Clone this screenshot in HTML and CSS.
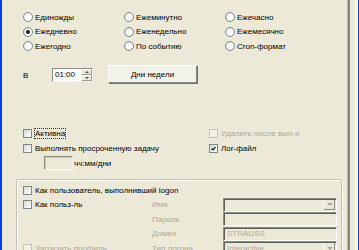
FILE: index.html
```html
<!DOCTYPE html>
<html lang="ru">
<head>
    <meta charset="UTF-8" />
    <title>Расписание</title>
    <link rel="stylesheet" href="styles.css">
</head>
<body>
    <div class="window">
        <div class="edge-left"></div>
        <div class="page">
            <div class="modes">
                <label class="opt"><span class="radio"></span>Единожды</label>
                <label class="opt"><span class="radio"></span>Ежеминутно</label>
                <label class="opt"><span class="radio"></span>Ежечасно</label>
                <label class="opt"><span class="radio on"></span>Ежедневно</label>
                <label class="opt"><span class="radio"></span>Еженедельно</label>
                <label class="opt"><span class="radio"></span>Ежемесячно</label>
                <label class="opt"><span class="radio"></span>Ежегодно</label>
                <label class="opt"><span class="radio"></span>По событию</label>
                <label class="opt"><span class="radio"></span>Cron-формат</label>
            </div>

            <div class="time-row">
                <span class="time-label">В</span>
                <div class="spin">
                    <span class="spin-value">01:00</span>
                    <span class="spin-btns">
                        <span class="spin-btn"><i class="arr up"></i></span>
                        <span class="spin-btn"><i class="arr down"></i></span>
                    </span>
                </div>
                <button class="btn">Дни недели</button>
            </div>

            <div class="flags">
                <label class="opt"><span class="check"></span><span class="focus">Активна</span></label>
                <label class="opt off"><span class="check"></span>Удалить после вып-я</label>
                <label class="opt"><span class="check"></span>Выполнять просроченную задачу</label>
                <label class="opt"><span class="check on"><svg viewBox="0 0 9 9"><polyline points="2,4.5 3.8,6.3 7,2.5" /></svg></span>Лог-файл</label>
            </div>
            <div class="late-row">
                <span class="edit late"></span>чч:мм/дни
            </div>

            <div class="group">
                <label class="opt"><span class="check"></span>Как пользователь, выполнивший logon</label>
                <div class="account">
                    <label class="opt"><span class="check"></span>Как польз-ль</label>
                    <span class="lbl">Имя</span>
                    <span class="edit combo"><span class="drop"><i class="arr down"></i></span></span>

                    <span></span>
                    <span class="lbl">Пароль</span>
                    <span class="edit"></span>

                    <span></span>
                    <span class="lbl">Домен</span>
                    <span class="edit">STRAUSS</span>

                    <label class="opt off"><span class="check"></span>Загрузить профиль</label>
                    <span class="lbl">Тип логона</span>
                    <span class="edit combo">Interactive<span class="drop"><i class="arr down"></i></span></span>
                </div>
            </div>
        </div>
        <div class="frame-right"></div>
        <div class="edge-right"></div>
    </div>
</body>
</html>
```

FILE: styles.css
```css
html,
body {
    margin: 0;
    background: #ece9d8;
}

body {
    font-family: "Liberation Sans", Arial, sans-serif;
    font-size: 8px;
    color: #000;
}

.window {
    display: flex;
    height: 250px;
    overflow: hidden;
}

.edge-left {
    width: 2px;
    background: #0a3ed8;
}

.page {
    width: 345px;
    padding-top: 10px;
    box-sizing: border-box;
}

.frame-right {
    width: 2px;
    border-left: 1px solid #b9b6a6;
    background: #86857b;
    margin-right: 5px;
}

.edge-right {
    flex: 1;
    border-left: 3px solid #f6f5ef;
    background: #0a3ed8;
}

/* radio / checkbox */
.opt {
    display: flex;
    align-items: center;
    white-space: nowrap;
}

.radio,
.check {
    flex: none;
    box-sizing: border-box;
    position: relative;
}

.radio {
    width: 10px;
    height: 10px;
    margin-right: 2px;
    border: 1px solid #7b8894;
    border-radius: 50%;
    background: radial-gradient(circle at 65% 65%, #fff 30%, #dcdbd2 100%);
}

.radio.on::after {
    content: "";
    position: absolute;
    left: 2px;
    top: 2px;
    width: 4px;
    height: 4px;
    border-radius: 50%;
    background: #1d1d1d;
}

.check {
    width: 9px;
    height: 9px;
    margin-right: 3px;
    border: 1px solid #7d8790;
    background: linear-gradient(135deg, #dcdbd2, #fff);
}

.check svg {
    display: block;
    width: 7px;
    height: 7px;
}

.check polyline {
    fill: none;
    stroke: #111;
    stroke-width: 1.6;
}

.opt.off {
    color: #aca899;
}

.opt.off .check {
    border-color: #c9c6b6;
    background: #f2f0e6;
}

.focus {
    outline: 1px dotted #333;
    outline-offset: 0;
}

/* schedule kind */
.modes {
    display: grid;
    grid-template-columns: 101px 101px 101px;
    grid-auto-rows: 14.5px;
    padding-left: 21px;
}

/* time */
.time-row {
    display: flex;
    align-items: center;
    margin-top: 11.5px;
    padding-left: 21px;
    height: 18px;
}

.time-label {
    width: 29px;
    padding-top: 3px;
}

.spin {
    display: flex;
    width: 41px;
    height: 14px;
    box-sizing: border-box;
    border: 1px solid;
    border-color: #8c8c85 #f4f3ee #f4f3ee #8c8c85;
    background: #fff;
    margin-top: 2px;
}

.spin-value {
    flex: 1;
    padding-left: 2px;
    line-height: 12px;
}

.spin-btns {
    display: flex;
    flex-direction: column;
    width: 11px;
}

.spin-btn {
    flex: 1;
    display: flex;
    align-items: center;
    justify-content: center;
    background: #ece9d8;
    border: 1px solid;
    border-color: #fff #9d9a8c #9d9a8c #fff;
}

.arr {
    width: 0;
    height: 0;
    border-left: 2px solid transparent;
    border-right: 2px solid transparent;
}

.arr.up {
    border-bottom: 2px solid #555;
}

.arr.down {
    border-top: 2px solid #555;
}

.btn {
    margin-left: 15px;
    width: 89px;
    height: 18px;
    padding: 0;
    font: inherit;
    color: #000;
    border: 1px solid;
    border-color: #fbfaf6 #8d8b80 #8d8b80 #fbfaf6;
    box-shadow: 1px 1px 0 #6e6d66;
    background: #f2f1ea;
}

/* flags */
.flags {
    display: grid;
    grid-template-columns: 186px 1fr;
    grid-auto-rows: 15px;
    margin-top: 43px;
    padding-left: 21px;
}

.late-row {
    display: flex;
    align-items: center;
    height: 14px;
    padding-left: 42px;
}

.edit {
    display: flex;
    align-items: center;
    box-sizing: border-box;
    height: 14px;
    padding-left: 3px;
    border: 1px solid;
    border-color: #8d8c83 #fdfdfa #fdfdfa #8d8c83;
    box-shadow: inset 1px 1px 0 #5f5e58;
    background: #ece9d8;
    color: #aca899;
    position: relative;
}

.edit.late {
    width: 29px;
    margin-right: 1px;
    box-shadow: inset 1px 1px 0 #c9c6b8;
}

/* account group */
.group {
    margin: 9px 5px 0 14px;
    padding: 3px 4px 0 6px;
    height: 80px;
    border: 1px solid #c4c1b0;
    border-radius: 2px;
    box-shadow: inset 1px 1px 0 #fff, 1px 1px 0 #fff;
}

.group > .opt {
    height: 14.5px;
}

.account {
    display: grid;
    grid-template-columns: 129px 71px 114px;
    grid-auto-rows: 14.5px;
    align-items: center;
}

.account .opt {
    height: 100%;
}

.lbl {
    color: #aca899;
}

.account .edit {
    height: 14px;
}

.combo {
    padding-right: 13px;
}

.drop {
    position: absolute;
    right: 1px;
    top: 1px;
    bottom: 1px;
    width: 11px;
    display: flex;
    align-items: center;
    justify-content: center;
    background: #ece9d8;
    border-left: 1px solid #f8f7f2;
    box-shadow: inset -1px -1px 0 #8d8b80;
}

.drop .arr {
    border-left-width: 3px;
    border-right-width: 3px;
    border-top: 3px solid #aca899;
}
```
